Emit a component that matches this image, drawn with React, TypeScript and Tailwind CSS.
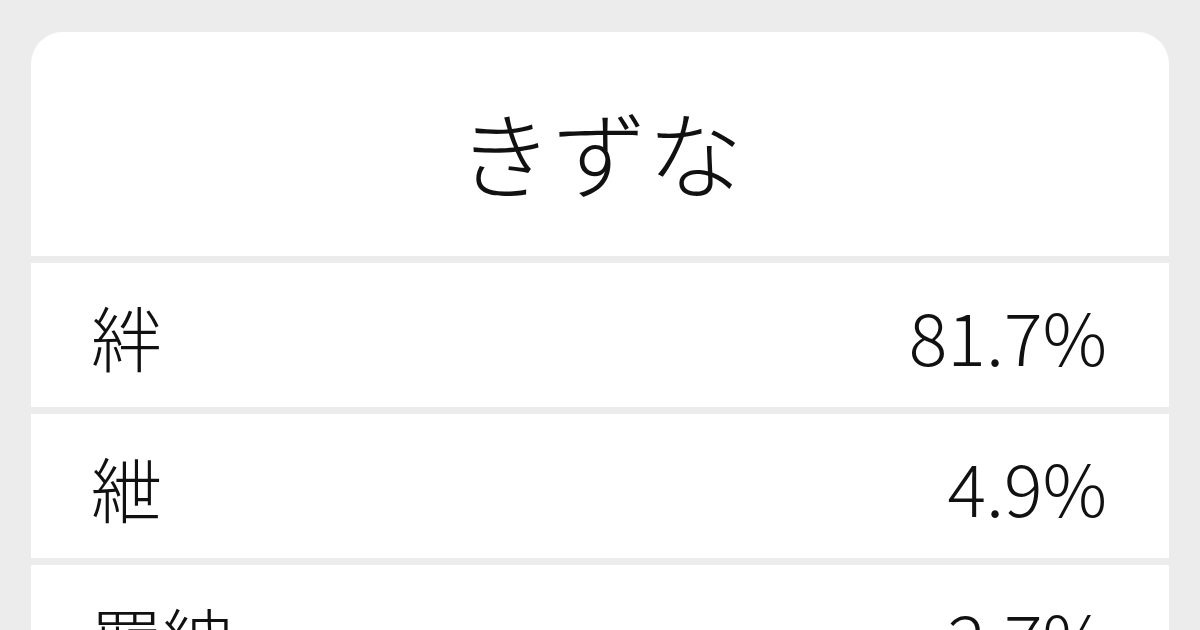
import React from "react";

const rows = [
  { w: "絆", p: "81.7%" },
  { w: "紲", p: "4.9%" },
  { w: "羈絏", p: "2.7%" },
];

export default function App() {
  return (
    <div
      className="w-[1200px] h-[630px] overflow-hidden bg-[#ececec] px-[31px] pt-[32px]"
      style={{ fontFamily: '"Noto Sans CJK JP", "Noto Sans", sans-serif' }}
    >
      <div className="flex flex-col gap-[7px] rounded-t-[32px] overflow-hidden">
        <div className="h-[224px] bg-white flex items-center justify-center pt-[12px]">
          <span className="text-[95px] font-light leading-none text-[#111]">きずな</span>
        </div>
        {rows.map((r) => (
          <div key={r.w} className="h-[144px] bg-white flex items-center justify-between pl-[60px] pr-[62px]">
            <span className="text-[71px] font-light leading-none text-[#111]">{r.w}</span>
            <span className="text-[72px] font-light leading-none text-[#111]">{r.p}</span>
          </div>
        ))}
      </div>
    </div>
  );
}
